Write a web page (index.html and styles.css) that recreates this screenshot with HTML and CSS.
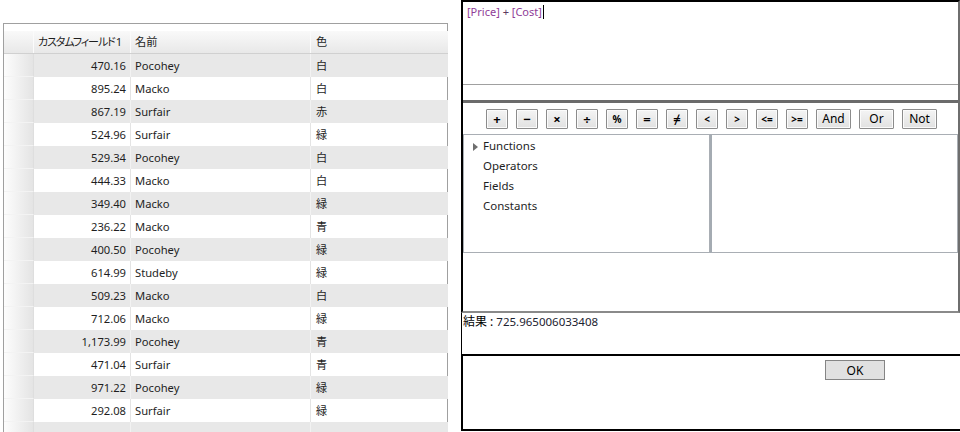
FILE: index.html
```html
<!DOCTYPE html>
<html lang="ja">
<head>
<meta charset="utf-8">
<title>Expression Editor</title>
<link rel="stylesheet" href="styles.css">
</head>
<body>
<div class="page">
  <section class="grid-area">
    <div class="grid">
      <div class="row head">
        <div class="rh"></div>
        <div class="c c1"><span class="jp">カスタムフィールド</span>1</div>
        <div class="c c2">名前</div>
        <div class="c c3">色</div>
      </div>
      <div class="rows">
        <div class="row alt"><div class="rh"></div><div class="c c1">470.16</div><div class="c c2">Pocohey</div><div class="c c3">白</div></div>
        <div class="row"><div class="rh"></div><div class="c c1">895.24</div><div class="c c2">Macko</div><div class="c c3">白</div></div>
        <div class="row alt"><div class="rh"></div><div class="c c1">867.19</div><div class="c c2">Surfair</div><div class="c c3">赤</div></div>
        <div class="row"><div class="rh"></div><div class="c c1">524.96</div><div class="c c2">Surfair</div><div class="c c3">緑</div></div>
        <div class="row alt"><div class="rh"></div><div class="c c1">529.34</div><div class="c c2">Pocohey</div><div class="c c3">白</div></div>
        <div class="row"><div class="rh"></div><div class="c c1">444.33</div><div class="c c2">Macko</div><div class="c c3">白</div></div>
        <div class="row alt"><div class="rh"></div><div class="c c1">349.40</div><div class="c c2">Macko</div><div class="c c3">緑</div></div>
        <div class="row"><div class="rh"></div><div class="c c1">236.22</div><div class="c c2">Macko</div><div class="c c3">青</div></div>
        <div class="row alt"><div class="rh"></div><div class="c c1">400.50</div><div class="c c2">Pocohey</div><div class="c c3">緑</div></div>
        <div class="row"><div class="rh"></div><div class="c c1">614.99</div><div class="c c2">Studeby</div><div class="c c3">緑</div></div>
        <div class="row alt"><div class="rh"></div><div class="c c1">509.23</div><div class="c c2">Macko</div><div class="c c3">白</div></div>
        <div class="row"><div class="rh"></div><div class="c c1">712.06</div><div class="c c2">Macko</div><div class="c c3">緑</div></div>
        <div class="row alt"><div class="rh"></div><div class="c c1">1,173.99</div><div class="c c2">Pocohey</div><div class="c c3">青</div></div>
        <div class="row"><div class="rh"></div><div class="c c1">471.04</div><div class="c c2">Surfair</div><div class="c c3">青</div></div>
        <div class="row alt"><div class="rh"></div><div class="c c1">971.22</div><div class="c c2">Pocohey</div><div class="c c3">緑</div></div>
        <div class="row"><div class="rh"></div><div class="c c1">292.08</div><div class="c c2">Surfair</div><div class="c c3">緑</div></div>
        <div class="row alt"><div class="rh"></div><div class="c c1"></div><div class="c c2"></div><div class="c c3"></div></div>
      </div>
    </div>
  </section>

  <section class="editor">
    <div class="designer">
      <div class="expr"><span class="fld">[Price]</span><span class="plus"> + </span><span class="fld">[Cost]</span><span class="caret"></span></div>
      <div class="gap"></div>
      <div class="splitter"></div>
      <div class="ops">
        <button class="ob">+</button>
        <button class="ob">−</button>
        <button class="ob">×</button>
        <button class="ob">÷</button>
        <button class="ob small">%</button>
        <button class="ob">=</button>
        <button class="ob">≠</button>
        <button class="ob small">&lt;</button>
        <button class="ob small">&gt;</button>
        <button class="ob small">&lt;=</button>
        <button class="ob small">&gt;=</button>
        <button class="ob word">And</button>
        <button class="ob word">Or</button>
        <button class="ob word">Not</button>
      </div>
      <div class="lists">
        <div class="tree">
          <div class="node"><span class="arrow"></span>Functions</div>
          <div class="node">Operators</div>
          <div class="node">Fields</div>
          <div class="node">Constants</div>
        </div>
        <div class="list"></div>
      </div>
    </div>
    <div class="result"><span class="lbl">結果 :</span> <span class="val">725.965006033408</span></div>
    <div class="footer"><button class="ok">OK</button></div>
  </section>
</div>
</body>
</html>
```

FILE: styles.css
```css
* { box-sizing: border-box; }

html, body {
  margin: 0;
  padding: 0;
  width: 960px;
  height: 432px;
  overflow: hidden;
  background: #fff;
}

body {
  font-family: "Noto Sans", "Noto Sans CJK JP", sans-serif;
  font-size: 11.2px;
  color: #1e1e1e;
}

.page {
  display: flex;
  height: 432px;
}

/* ---------- grid ---------- */
.grid-area {
  width: 461px;
  flex: none;
  padding: 23px 0 0 3px;
}

.grid {
  width: 445px;
  border: 1px solid #a0a0a0;
  border-bottom: none;
  padding-top: 7px;
}

.head, .rows { margin-right: -1px; }

.row {
  display: flex;
  height: 23px;
}

.row .c {
  line-height: 23px;
  white-space: nowrap;
  overflow: hidden;
  border-right: 1px solid #e4e4e4;
}

.rh {
  width: 30px;
  flex: none;
  background: linear-gradient(to right, #fdfdfd, #e4e4e4);
  border-right: 1px solid #dedede;
  border-bottom: 1px solid #f3f3f3;
}

.c1 { width: 97px; flex: none; text-align: right; padding-right: 4px; }
.c2 { width: 180px; flex: none; padding-left: 4px; }
.c3 { flex: 1; padding-left: 5px; border-right: none !important; }

.alt { background: #e8e8e8; }
.alt .c { border-right-color: #f2f2f2; }

.head {
  background: linear-gradient(#f9f9f9, #e8e8e8);
  border-bottom: 1px solid #d0d0d0;
}
.head .c { line-height: 22px; border-right-color: #fbfbfb; }
.head .c1 { text-align: left; padding-left: 4px; padding-right: 0; }
.head .rh { background: transparent; border-bottom: none; border-right-color: #fbfbfb; }
.jp {
  font-feature-settings: "palt";
  font-size: 11px;
  letter-spacing: -1.1px;
  margin-right: 1px;
}

/* ---------- editor ---------- */
.editor {
  width: 499px;
  flex: none;
  display: flex;
  flex-direction: column;
}

.designer {
  height: 313px;
  border-style: solid;
  border-width: 2px;
  border-color: #000 #6e6e6e #8a8a8a #000;
  display: flex;
  flex-direction: column;
}

.expr {
  height: 83px;
  flex: none;
  border-bottom: 1px solid #a0a0a0;
  padding: 3px 4px;
  font-size: 11px;
  line-height: 14px;
  white-space: pre;
}
.fld { color: #8f3c98; }
.plus { color: #5c3a60; }
.caret {
  display: inline-block;
  width: 1px;
  height: 14px;
  background: #000;
  vertical-align: -3px;
  margin-left: 1px;
}

.gap { height: 15px; flex: none; }
.splitter { height: 3px; flex: none; background: #6b6b6b; }

.ops {
  height: 31px;
  flex: none;
  display: flex;
  gap: 8px;
  padding: 6px 0 0 23px;
}

.ob {
  width: 22px;
  height: 20px;
  padding: 0;
  margin: 0;
  border: 1px solid #8c8c8c;
  border-radius: 1px;
  background: linear-gradient(#f4f4f4, #e1e1e1);
  box-shadow: inset 0 0 0 1px #fbfbfb;
  font-family: "Noto Sans", "DejaVu Sans", sans-serif;
  font-size: 13px;
  font-weight: 700;
  line-height: 16px;
  color: #000;
}
.ob.small { font-size: 10px; }
.ob.word {
  width: 35px;
  font-size: 12px;
  font-weight: 400;
}

.lists {
  height: 119px;
  flex: none;
  display: flex;
}

.tree {
  width: 247px;
  flex: none;
  border: 1px solid #a9aeb4;
  padding-top: 1px;
}

.node {
  height: 20px;
  line-height: 20px;
  padding-left: 19px;
  font-size: 11.5px;
}

.arrow {
  display: inline-block;
  width: 0;
  height: 0;
  border-left: 5px solid #6f6f6f;
  border-top: 4px solid transparent;
  border-bottom: 4px solid transparent;
  margin-left: -10px;
  margin-right: 5px;
  vertical-align: -0.5px;
}

.list {
  flex: 1;
  border: 1px solid #a9aeb4;
  border-left: 2px solid #a4abb2;
}

.result {
  height: 41px;
  flex: none;
  border-left: 1px solid #000;
  padding-left: 1px;
  font-size: 11.5px;
  line-height: 18px;
}
.lbl { color: #000; font-size: 12px; }
.val { color: #1c2230; }

.footer {
  height: 77px;
  flex: none;
  border-top: 2px solid #000;
  border-bottom: 2px solid #000;
  border-left: 2px solid #000;
}

.ok {
  display: block;
  margin: 4px 0 0 362px;
  width: 60px;
  height: 20px;
  padding: 0;
  border: 1px solid #858585;
  background: #e1e1e1;
  font-family: "Noto Sans", sans-serif;
  font-size: 12px;
  color: #000;
}
```
